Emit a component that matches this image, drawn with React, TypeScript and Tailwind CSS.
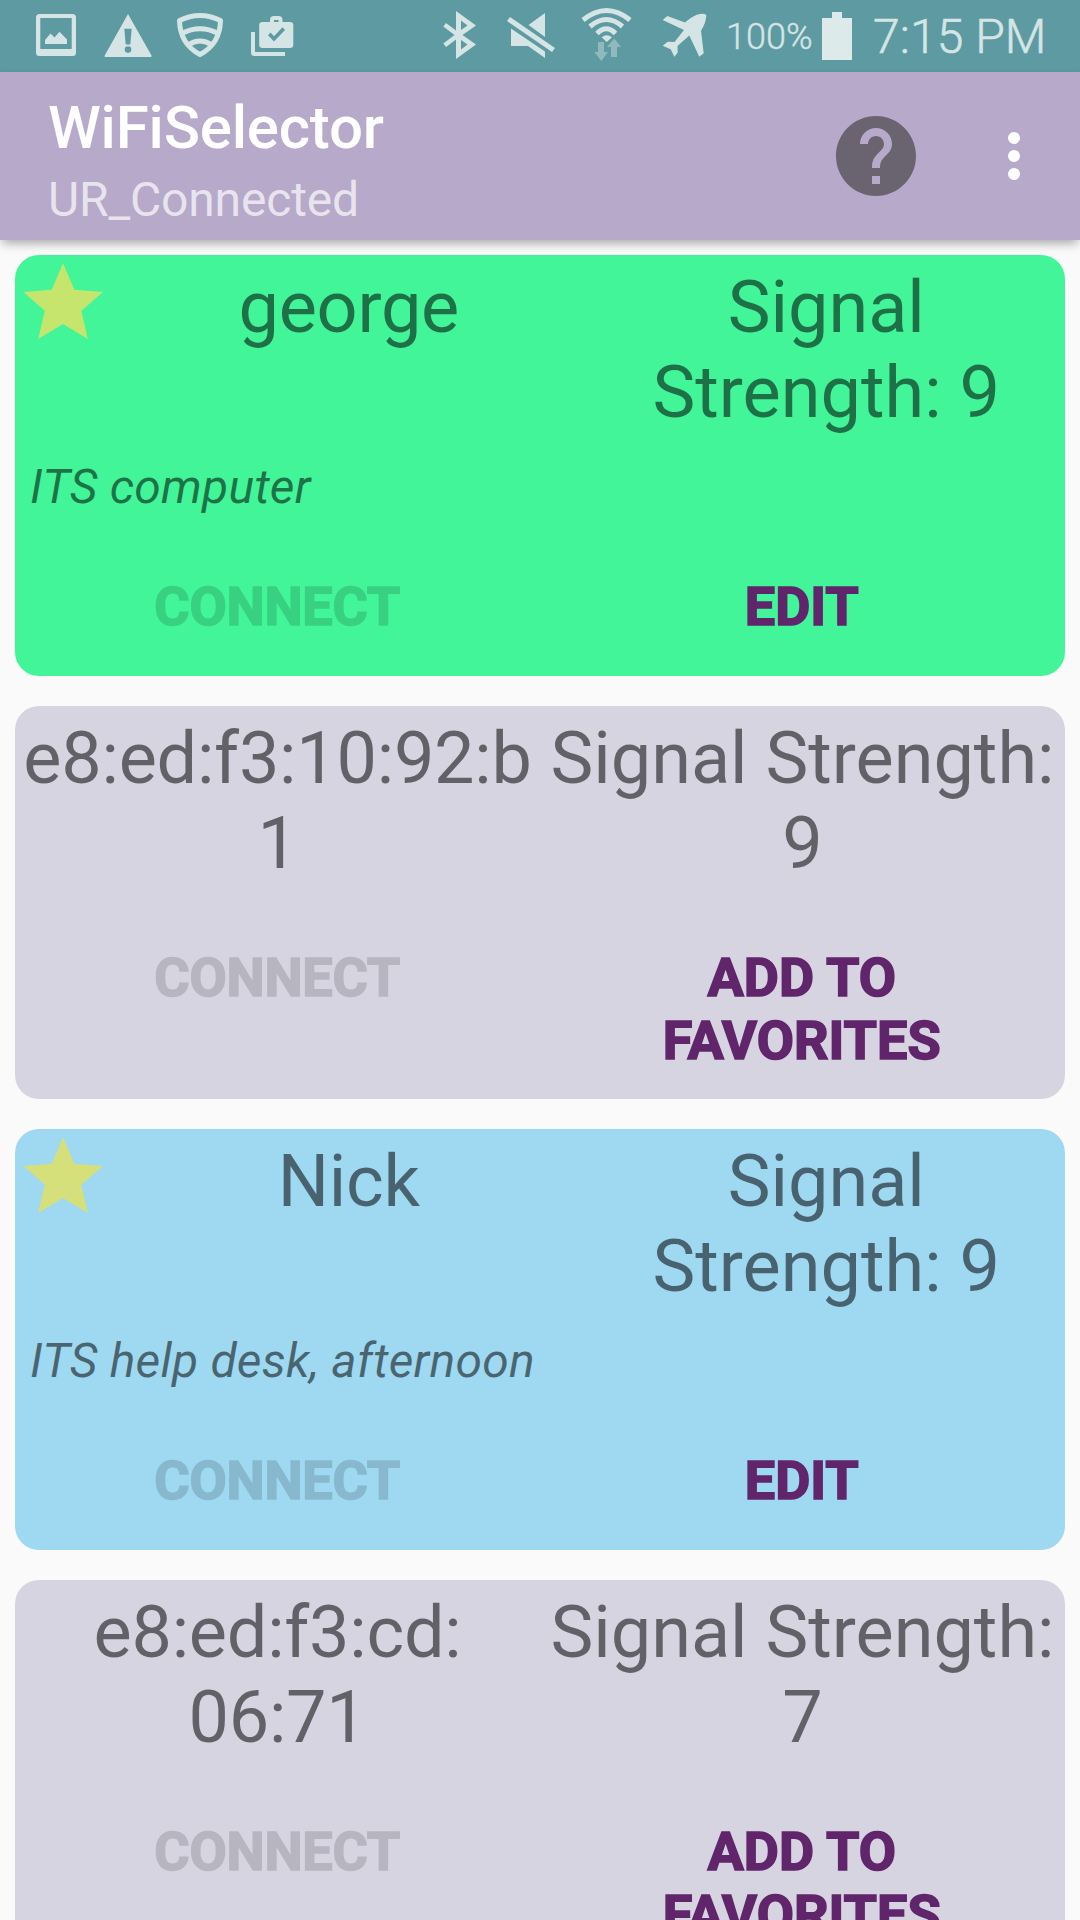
import React from "react";
import { MdHelp } from "react-icons/md";

type Network = {
  name: string[];
  strength: string[];
  note?: string;
  action: string[];
  color: string;
};

const networks: Network[] = [
  {
    name: ["george"],
    strength: ["Signal", "Strength: 9"],
    note: "ITS computer",
    action: ["EDIT"],
    color: "bg-[#42f599]",
  },
  {
    name: ["e8:ed:f3:10:92:b", "1"],
    strength: ["Signal Strength:", "9"],
    action: ["ADD TO", "FAVORITES"],
    color: "bg-[#d6d4e1]",
  },
  {
    name: ["Nick"],
    strength: ["Signal", "Strength: 9"],
    note: "ITS help desk, afternoon",
    action: ["EDIT"],
    color: "bg-[#9ed8f1]",
  },
  {
    name: ["e8:ed:f3:cd:", "06:71"],
    strength: ["Signal Strength:", "7"],
    action: ["ADD TO", "FAVORITES"],
    color: "bg-[#d6d4e1]",
  },
];

function Lines({ items }: { items: string[] }) {
  return (
    <>
      {items.map((t) => (
        <span key={t} className="block whitespace-nowrap">
          {t}
        </span>
      ))}
    </>
  );
}

function Star() {
  return (
    <svg width="80" height="76" viewBox="0 0 80 76" className="ml-2 -mt-0.5 shrink-0">
      <path
        d="M40 .3 51.4 26.7 80 29 58.3 47.7 64.8 76 40 61 15.2 76 21.8 47.7 .4 29 28.7 26.7Z"
        fill="#e1e163"
        fillOpacity="0.83"
      />
    </svg>
  );
}

function Card({ n }: { n: Network }) {
  const favorite = n.note !== undefined;
  return (
    <section
      className={`flex shrink-0 flex-col rounded-3xl pt-2.5 ${n.color} ${favorite ? "h-[421px]" : "h-[393px]"}`}
    >
      <div className="flex text-center text-[72px] leading-[85px] text-black/54">
        {favorite && (
          <div className="w-[95px] shrink-0">
            <Star />
          </div>
        )}
        <div className="min-w-0 flex-1 tracking-[-0.25px]">
          <Lines items={n.name} />
        </div>
        <div className="min-w-0 flex-1">
          <Lines items={n.strength} />
        </div>
      </div>
      {favorite && (
        <p className="mt-6 pl-[15px] text-[48px] leading-[56px] tracking-[0.22px] italic text-black/54">{n.note}</p>
      )}
      <div className="mt-[60px] flex pr-px text-center text-[54px] leading-[63px] font-bold">
        <div className="flex-1 tracking-[-0.2px] text-black opacity-14 [-webkit-text-stroke:1.6px_black]">CONNECT</div>
        <div className="flex-1 text-[#60256a] [-webkit-text-stroke:1.6px_#60256a]">
          <Lines items={n.action} />
        </div>
      </div>
    </section>
  );
}

function NotificationIcons() {
  return (
    <svg width="264" height="72" viewBox="36 0 264 72" className="ml-9 shrink-0" fill="#d5e5e5">
      <path
        fillRule="evenodd"
        d="M39.500 14H72.500Q76 14 76 17.500V52.500Q76 56 72.500 56H39.500Q36 56 36 52.500V17.500Q36 14 39.500 14ZM40.300 18V49H71.700V18Z"
      />
      <path d="M45 44V40L50.500 33.500 54.500 37.500 59.500 31.700 67 39.500V44Z" />
      <path
        fillRule="evenodd"
        d="M128 14 151.500 55.500Q152 57 150.500 57H105.500Q104 57 104.700 55.500ZM124.300 28.700 125.700 44.500H130.300L131.700 28.700ZM128 46.300A3.300 3.300 0 1 0 128 52.900A3.300 3.300 0 1 0 128 46.300Z"
      />
      <g fill="none" stroke="#d5e5e5" strokeWidth="5" strokeLinejoin="round">
        <path d="M179.500 20.500Q200 10.500 220.500 20.500Q220 44 200 54.500Q180 44 179.500 20.500Z" />
        <path d="M182 33.500Q200 24 218 33.500" />
        <path d="M188 45Q200 37 212 45" />
      </g>
      <path
        fillRule="evenodd"
        d="M263 22H270V20Q270 16 274 16H278.500Q282.500 16 282.500 20V22H290Q293.300 22 293.300 25V45Q293.300 48 290 48H262.500Q259.200 48 259.200 45V25Q259.200 22 262.500 22ZM274 22H278.500V20H274ZM268 35.200 274 41.500 285 30 282.500 27.300 274 36.300 270.500 32.500Z"
      />
      <path d="M251 32H255V52H285V56H254.500Q251 56 251 52.500Z" />
    </svg>
  );
}

function SystemIcons() {
  return (
    <svg width="270" height="72" viewBox="440 0 270 72" className="shrink-0" fill="#d5e5e5">
      <path
        fillRule="evenodd"
        d="M456 11 476 25.500 462.500 35 476 44.500 456 59V39.500L446 47 443.300 43.500 454.500 35 443.300 26.500 446 23 456 30.500ZM461 20.500V30L467.500 25.500ZM461 40V49.500L467.500 44.500Z"
      />
      <path d="M510 17 555 48 552 52 507 21Z" />
      <path d="M545 13V37L528.500 25Z" />
      <path d="M511 28.500 545 51.500V58L528 46H511Z" />
      <g fill="none" stroke="#d5e5e5" strokeWidth="5">
        <path d="M583 20Q606.500 1 630 20" />
        <path d="M590 26.500Q606.500 12.500 622.500 26.500" />
        <path d="M597 33.500Q606.500 24 615.500 33.500" />
      </g>
      <path d="M601.700 37.300Q606.500 33 612 37.300L606.700 42Z" />
      <path fillOpacity=".42" d="M598 42H604V52H608L601.300 61 594.300 52H598ZM611 57V47H607L614.300 38.500 621 47H617V57Z" />
      <path d="M667.300 16 685 22.500Q694 14.500 700 14Q706 13 706.300 15.500Q706 23 701 30.700L703.700 53.300 699.300 56.700 689.300 35.500 677.500 46 677.700 52.700 674.300 56.700 670.700 49.300 662.700 45.700 667.700 41.700 674.500 42 684 30 662.700 20Z" />
    </svg>
  );
}

export default function App() {
  return (
    <div className="flex h-[1920px] w-[1080px] flex-col overflow-hidden bg-[#fafafa] font-[Roboto,sans-serif]">
      <header className="flex h-[72px] shrink-0 items-center bg-[#5e9aa1] text-[#d5e5e5]">
        <NotificationIcons />
        <div className="ml-[140px]">
          <SystemIcons />
        </div>
        <span className="ml-4 w-[84px] pt-0.5 text-[36px] font-light whitespace-nowrap [-webkit-text-stroke:0.4px_#d5e5e5]">
          100%
        </span>
        <svg width="30" height="48" viewBox="0 0 30 48" className="ml-3 shrink-0" fill="#dceaea">
          <path d="M10 0H20V6H30V48H0V6H10Z" />
        </svg>
        <span className="ml-[21px] pt-0.5 text-[48px] font-light tracking-[0.1px] whitespace-nowrap [-webkit-text-stroke:0.6px_#d5e5e5]">
          7:15 PM
        </span>
      </header>
      <div className="z-10 flex h-[168px] shrink-0 items-center bg-[#b7a9c9] pl-12 shadow-[0_5px_10px_-2px_rgba(0,0,0,0.35)]">
        <div className="flex h-full flex-1 flex-col pt-[21px]">
          <h1 className="text-[60px] leading-[70px] font-medium tracking-[-0.2px] text-white">WiFiSelector</h1>
          <p className="mt-[9px] text-[48px] leading-[56px] tracking-[-0.15px] text-white/70">UR_Connected</p>
        </div>
        <MdHelp size={96} className="text-[#6a6470]" />
        <div className="mr-[60px] ml-[84px] flex flex-col gap-1.5">
          <i className="size-3 rounded-full bg-white" />
          <i className="size-3 rounded-full bg-white" />
          <i className="size-3 rounded-full bg-white" />
        </div>
      </div>
      <main className="flex min-h-0 flex-1 flex-col gap-[30px] px-[15px] pt-[15px]">
        {networks.map((n) => (
          <Card key={n.name[0]} n={n} />
        ))}
      </main>
    </div>
  );
}
